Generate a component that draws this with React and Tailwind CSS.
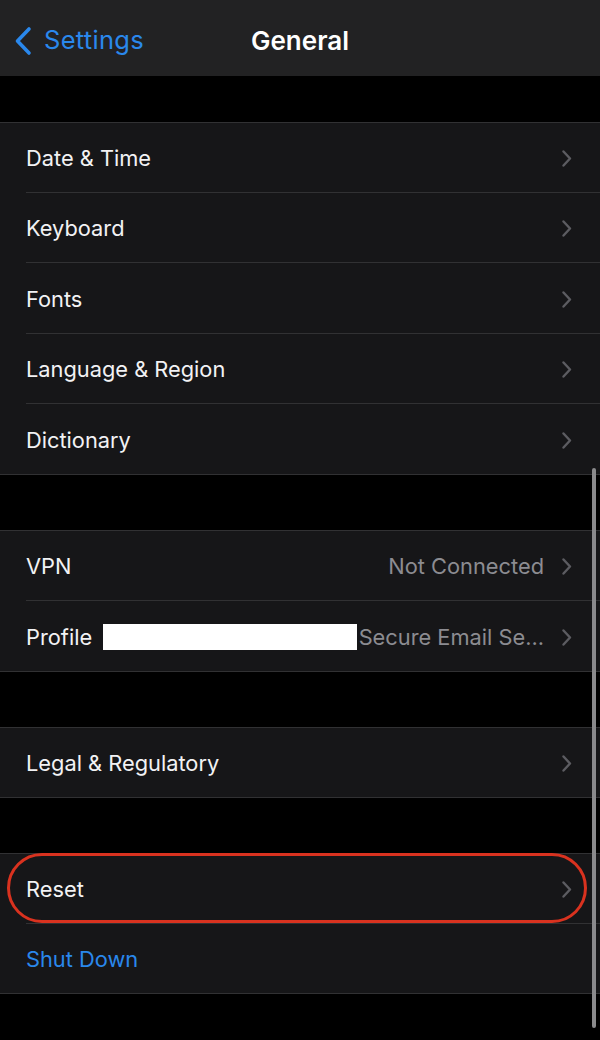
import React from "react";

const font = { fontFamily: "Inter, 'Noto Sans', sans-serif" };

function Chevron() {
  return (
    <svg width="10" height="17" viewBox="0 0 10 17" fill="none" className="shrink-0">
      <path d="M1.5 1.5 L8 8.5 L1.5 15.5" stroke="#5c5c61" strokeWidth="2.4" strokeLinecap="round" strokeLinejoin="round" />
    </svg>
  );
}

function Row({ label, value, blue, last, chevron = true, children, redact, h = "h-[69px]" }) {
  return (
    <div className="relative">
      <div className={`flex ${h} items-center pl-[26px] pr-[28px] pt-[2px]`}>
        <span className={`text-[21.8px] ${blue ? "text-[#2a88ec]" : "text-[#f2f2f4]"}`}>{label}</span>
        {redact && <span className="ml-[11px] h-[26px] w-[254px] bg-white shrink-0" />}
        <div className="flex-1" />
        {value && <span className="mr-[18px] text-[21.8px] text-[#8c8c91] whitespace-nowrap">{value}</span>}
        {chevron && <Chevron />}
      </div>
      <div className={`h-px bg-[#313133] ${last ? "" : "ml-[26px]"}`} />
      {children}
    </div>
  );
}

function Group({ children }) {
  return (
    <div className="bg-[#161618]">
      <div className="h-px bg-[#313133]" />
      {children}
    </div>
  );
}

export default function App() {
  return (
    <div className="relative w-[600px] h-[1040px] bg-black overflow-hidden" style={font}>
      <div className="h-[76px] bg-[#222223] flex items-center relative pt-[5px]">
        <div className="flex items-center pl-[14px]">
          <svg width="18" height="30" viewBox="0 0 18 30" fill="none">
            <path d="M15 3 L3.5 15 L15 27" stroke="#2a88ec" strokeWidth="3.6" strokeLinecap="round" strokeLinejoin="round" />
          </svg>
          <span className="ml-[12px] text-[25.5px] text-[#2a88ec] tracking-[0.3px]">Settings</span>
        </div>
        <span className="absolute left-1/2 top-[5px] bottom-0 flex items-center -translate-x-1/2 text-[26px] font-semibold text-white">General</span>
      </div>
      <div className="h-[46px]" />
      <Group>
        <Row label="Date & Time" h="h-[69px]" />
        <Row label="Keyboard" h="h-[69px]" />
        <Row label="Fonts" h="h-[70px]" />
        <Row label="Language & Region" h="h-[69px]" />
        <Row label="Dictionary" h="h-[70px]" last />
      </Group>
      <div className="h-[55px]" />
      <Group>
        <Row label="VPN" value="Not Connected" />
        <Row label="Profile" value="Secure Email Se..." redact last h="h-[70px]" />
      </Group>
      <div className="h-[55px]" />
      <Group>
        <Row label="Legal & Regulatory" last />
      </Group>
      <div className="h-[55px]" />
      <Group>
        <Row label="Reset">
          <div className="absolute left-[7px] top-[-1px] w-[580px] h-[70px] rounded-full border-[3px] border-[#d9321f] pointer-events-none" />
        </Row>
        <Row label="Shut Down" blue chevron={false} last />
      </Group>
      <div className="absolute left-[592px] top-[468px] w-[4px] h-[560px] rounded-full bg-[#8a8a8c]" />
    </div>
  );
}
